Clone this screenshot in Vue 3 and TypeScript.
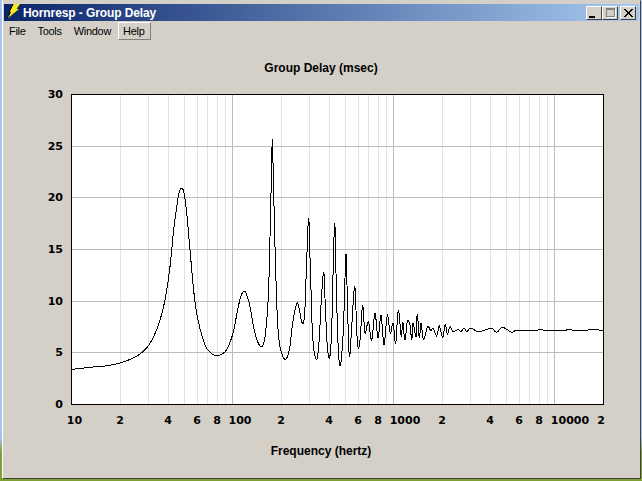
<script setup lang="ts">
const L = 71, R = 604, T = 94, B = 404
const decade = 161
const xAt = (hz: number) => L + 0.3 + Math.log10(hz / 10) * decade
const yTicks = [30, 25, 20, 15, 10, 5, 0]
const yAt = (v: number) => B - (v * (B - T)) / 30
const gridY = yTicks.filter((v) => v > 0 && v < 30).map((v) => Math.round(yAt(v)) + 0.5)

const major = [100, 1000, 10000].map((hz) => Math.round(xAt(hz)) + 0.5)
const minor: number[] = []
for (const d of [10, 100, 1000, 10000]) {
  for (let m = 2; m <= 9; m++) {
    const x = xAt(d * m)
    if (x < R - 1) minor.push(Math.round(x) + 0.5)
  }
}

const xLabels = [
  { t: '10', x: 74.5 }, { t: '2', x: 120 }, { t: '4', x: 168 }, { t: '6', x: 197 },
  { t: '8', x: 217 }, { t: '100', x: 240 }, { t: '2', x: 281 }, { t: '4', x: 329 },
  { t: '6', x: 358 }, { t: '8', x: 378 }, { t: '1000', x: 405 }, { t: '2', x: 442 },
  { t: '4', x: 490 }, { t: '6', x: 519 }, { t: '8', x: 539 }, { t: '10000', x: 570 }, { t: '2', x: 601 }
]

const raw = [
  71.7,369.3, 93,367, 110,365.3, 126.7,360.7, 140,354, 150,343.3, 158.3,325, 165,300, 170,266.7, 173.3,233,
  176.7,206.7, 179.3,191.7, 181.7,188.3, 184,193, 186.7,213, 190,250, 193.3,286.7, 196.7,313, 201.7,335,
  206.7,348.3, 212.7,354.3, 217.3,355.7, 223.3,353.3, 228.3,346.7, 233.3,331.7, 237.3,311.7, 240.7,296.7,
  244.3,291, 247.3,296.7, 250,306.7, 255,333.3, 260.7,346.7, 265,336.7, 268.3,296.7, 270,236.7, 271.7,163,
  272.3,139.3, 273.3,173, 275,246.7, 277.3,316.7, 280,346.7, 285,359.3, 289.3,350, 292.7,323.3, 296.7,303.3,
  299,308.3, 302.3,323.3, 304.7,313.3, 306.7,260, 308.7,218.3, 310.3,266.7, 312.7,336.7, 316,359.3, 318.7,346.7,
  321.3,300, 323.7,271.7, 325.3,306.7, 327.3,346.7, 329.7,357.3, 331.7,330, 333.3,263.3, 334.7,222.7, 336,273.3,
  338.3,350, 340.7,364.3, 343.3,330, 346,254.3, 347.3,296.7, 349.3,356.7, 351.7,326.7, 354.7,286, 356.7,330,
  358.3,348.3, 360.3,336.7, 362.7,305, 365,333.3, 368.3,321.7, 371.7,340, 375,312.7, 378,338.3, 381,315, 384,345,
  387.3,315, 390.3,333.3, 393,322.7, 395.7,343.3, 398.3,310, 401.3,336.7, 402.7,321.7, 405,340, 407.3,321.7,
  410,325, 411.7,340, 413,323, 416,336.7, 417.3,314, 419.3,338, 421,323, 423.3,339, 426,331.7, 428,326,
  430.7,330.7, 433.3,328.3, 436.7,336, 439.3,326, 442.7,337.3, 445.3,324.3, 447.3,334, 450,326.7, 453.3,331.7,
  458.3,329.3, 460.7,331.7, 464,328.3, 466.7,331.7, 470,328.3, 473.3,329.3, 478.3,331.7, 485,330, 491.7,328.3,
  496.7,332.3, 501.7,327.3, 506.7,329.3, 511.7,332.3, 516.7,330, 523.3,330.7, 535,330.5, 541,329.5, 546,331,
  556,330, 563,331, 569,329.5, 575,330.5, 584,330.5, 592,329.5, 603,330.3
]

// Catmull-Rom resampling: the reference trace is a smooth curve.
function smooth(v: number[]): string {
  const n = v.length / 2
  const pt = (i: number) => {
    const k = Math.max(0, Math.min(n - 1, i))
    return [v[k * 2], v[k * 2 + 1]]
  }
  const out: string[] = []
  for (let i = 0; i < n - 1; i++) {
    const [p0, p1, p2, p3] = [pt(i - 1), pt(i), pt(i + 1), pt(i + 2)]
    for (let s = 0; s < 5; s++) {
      const t = s / 5
      const f = (a: number, b: number, c: number, d: number) =>
        0.5 * (2 * b + (c - a) * t + (2 * a - 5 * b + 4 * c - d) * t * t + (3 * b - a - 3 * c + d) * t * t * t)
      out.push(`${f(p0[0], p1[0], p2[0], p3[0]).toFixed(1)},${f(p0[1], p1[1], p2[1], p3[1]).toFixed(1)}`)
    }
  }
  out.push(`${v[v.length - 2]},${v[v.length - 1]}`)
  return out.join(' ')
}
const curve = smooth(raw)
</script>

<template>
  <div class="desktop">
    <div class="window">
      <div class="titlebar">
        <svg class="app-icon" width="14" height="15" viewBox="0 0 14 15">
          <path d="M6.500 0 H13 L9.500 5 H12 L0.500 14.500 L4 8 H2.500 Z" fill="#f7ea1c" />
          <path d="M6.500 0 L2.500 8 H1.500 L5.500 0 Z M4 8 L0.500 14.500 L0 14 L3 8 Z" fill="#000" />
        </svg>
        <span class="title">Hornresp - Group Delay</span>
        <div class="controls">
          <button class="ctl"><span class="min"></span></button>
          <button class="ctl"><span class="max"></span></button>
          <button class="ctl close">
            <svg width="9" height="8" viewBox="0 0 9 8" shape-rendering="crispEdges">
              <path d="M0 0h2l2.500 3 2.500-3h2L5.500 4 9 8H7L4.500 5 2 8H0l3.500-4z" fill="#000" />
            </svg>
          </button>
        </div>
      </div>
      <div class="menubar">
        <span class="menu">File</span>
        <span class="menu">Tools</span>
        <span class="menu">Window</span>
        <span class="menu active">Help</span>
      </div>
      <div class="chart-area">
        <svg class="chart" width="634" height="437" viewBox="4 41 634 437">
          <text class="heading" x="321" y="72">Group Delay (msec)</text>
          <rect :x="L" :y="T" :width="R - L" :height="B - T" fill="#fff" />
          <g shape-rendering="crispEdges">
            <line v-for="x in minor" :key="'m' + x" :x1="x" :x2="x" :y1="T" :y2="B" stroke="#e2e2e2" />
            <line v-for="x in major" :key="'j' + x" :x1="x" :x2="x" :y1="T" :y2="B" stroke="#bcbcbc" />
            <line v-for="y in gridY" :key="'h' + y" :x1="L" :x2="R" :y1="y" :y2="y" stroke="#bcbcbc" />
            <polyline :points="curve" fill="none" stroke="#000" stroke-width="1" />
            <rect :x="L + 0.5" :y="T + 0.5" :width="R - L - 1" :height="B - T" fill="none" stroke="#000" />
          </g>
          <text v-for="v in yTicks" :key="'y' + v" class="tick" x="63" :y="yAt(v) + 4" text-anchor="end">{{ v }}</text>
          <text v-for="(l, i) in xLabels" :key="'x' + i" class="tick" :x="l.x" y="424" text-anchor="middle">{{ l.t }}</text>
          <text class="heading" x="321" y="455">Frequency (hertz)</text>
        </svg>
      </div>
    </div>
  </div>
</template>

<style>
html, body { margin: 0; padding: 0; overflow: hidden; }
</style>

<style scoped>
.desktop {
  width: 642px;
  height: 481px;
  box-sizing: border-box;
  padding: 0 1px 2px 2px;
  background: linear-gradient(180deg, #a8c4ee 0%, #a8c4ee 91%, #7fa03a 94%, #7fa030 100%);
  display: flex;
}
.window {
  flex: 1;
  display: flex;
  flex-direction: column;
  background: #d4d0c8;
  box-sizing: border-box;
  border-top: 1px solid #d4d0c8;
  border-left: 1px solid #ffffff;
  border-right: 1px solid #404040;
  border-bottom: 1px solid #404040;
  padding: 3px 1px 0 1px;
  font-family: "Liberation Sans", sans-serif;
}
.titlebar {
  height: 17px;
  flex: none;
  display: flex;
  align-items: center;
  background: linear-gradient(90deg, #0a246a, #a6caf0);
  color: #fff;
  padding: 0 3px;
}
.app-icon { flex: none; margin-right: 2px; margin-top: -2px; }
.title {
  font: bold 12px "Liberation Sans", sans-serif;
  letter-spacing: -0.1px;
  white-space: nowrap;
}
.controls { margin-left: auto; display: flex; }
.ctl {
  width: 16px;
  height: 14px;
  padding: 0;
  box-sizing: border-box;
  background: #d4d0c8;
  border: 1px solid;
  border-color: #fff #404040 #404040 #fff;
  display: flex;
  align-items: center;
  justify-content: center;
}
.close { margin-left: 2px; }
.min {
  width: 6px;
  height: 2px;
  background: #000;
  align-self: flex-end;
  margin: 0 4px 1px 0;
}
.max {
  width: 7px;
  height: 6px;
  border: 1px solid #808080;
  border-top-width: 2px;
  box-shadow: 1px 1px 0 #fff;
  box-sizing: content-box;
}
.menubar {
  flex: none;
  height: 20px;
  display: flex;
  align-items: center;
  font: 11px "Liberation Sans", sans-serif;
  letter-spacing: -0.3px;
  color: #000;
}
.menu {
  padding: 0 6px 0 4px;
  height: 18px;
  line-height: 17px;
  box-sizing: border-box;
  border: 1px solid transparent;
}
.menu + .menu { padding-left: 4px; }
.active {
  border-color: #fff #808080 #808080 #fff;
}
.chart-area { flex: 1; min-height: 0; }
.chart { display: block; }
.heading {
  font: bold 12px "Liberation Sans", sans-serif;
  text-anchor: middle;
  fill: #000;
}
.tick {
  font: bold 11px "DejaVu Sans", sans-serif;
  fill: #000;
}
</style>
